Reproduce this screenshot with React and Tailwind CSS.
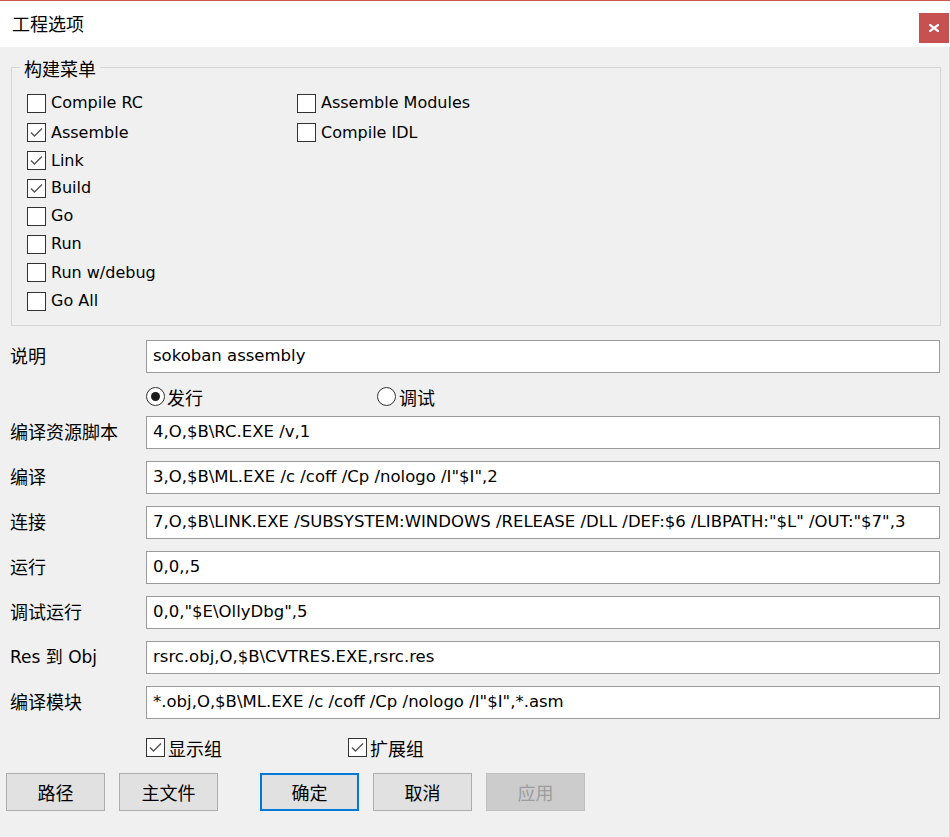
import React from 'react';

const LAT = "font-['DejaVu_Sans','Noto_Sans_CJK_SC',sans-serif]";
const CJK = "font-['Noto_Sans_CJK_SC','Noto_Sans',sans-serif]";

const CheckBox = ({ checked }) => (
  <span className="w-[19px] h-[19px] shrink-0 border border-[#333333] bg-white flex items-center justify-center">
    {checked && (
      <svg width="17" height="17" viewBox="0 0 17 17">
        <path d="M3 8.5 L6.5 12 L14 4.5" fill="none" stroke="#555555" strokeWidth="1.4" />
      </svg>
    )}
  </span>
);

const Radio = ({ checked }) => (
  <span className="w-[19px] h-[19px] shrink-0 rounded-full border border-[#333333] bg-white flex items-center justify-center">
    {checked && <span className="w-[9px] h-[9px] rounded-full bg-[#1a1a1a]" />}
  </span>
);

// build menu, column 1 and 2 (row heights follow the screenshot)
const col1 = [
  ['Compile RC', false, 'h-[30px]'],
  ['Assemble', true, 'h-[29px]'],
  ['Link', true, 'h-[27px]'],
  ['Build', true, 'h-[28px]'],
  ['Go', false, 'h-[28px]'],
  ['Run', false, 'h-[28px]'],
  ['Run w/debug', false, 'h-[29px]'],
  ['Go All', false, 'h-[28px]'],
];

const col2 = [
  ['Assemble Modules', false, 'h-[30px]'],
  ['Compile IDL', false, 'h-[29px]'],
];

const fields = [
  ['编译资源脚本', '4,O,$B\\RC.EXE /v,1'],
  ['编译', '3,O,$B\\ML.EXE /c /coff /Cp /nologo /I"$I",2'],
  ['连接', '7,O,$B\\LINK.EXE /SUBSYSTEM:WINDOWS /RELEASE /DLL /DEF:$6 /LIBPATH:"$L" /OUT:"$7",3'],
  ['运行', '0,0,,5'],
  ['调试运行', '0,0,"$E\\OllyDbg",5'],
  ['Res 到 Obj', 'rsrc.obj,O,$B\\CVTRES.EXE,rsrc.res'],
  ['编译模块', '*.obj,O,$B\\ML.EXE /c /coff /Cp /nologo /I"$I",*.asm'],
];

const CheckRow = ({ label, checked, cls }) => (
  <div className={`flex items-center gap-[5px] ${cls}`}>
    <CheckBox checked={checked} />
    <span className="text-[16px] leading-none text-black">{label}</span>
  </div>
);

const Field = ({ label, value, cls }) => (
  <div className={`flex items-center h-[33px] ${cls}`}>
    <span className={`w-[136px] text-black leading-none ${/^[A-Za-z]/.test(label) ? 'text-[17px]' : 'text-[18px]'}`}>
      {label}
    </span>
    <div className="w-[794px] h-full bg-white border border-[#9a9a9a] flex items-center pl-[6px] overflow-hidden whitespace-nowrap text-[16.5px] text-black leading-none">
      {value}
    </div>
  </div>
);

const Btn = ({ children, cls, primary, disabled }) => (
  <button
    className={`w-[99px] h-[38px] flex items-center justify-center text-[18px] ${CJK} ${
      primary
        ? 'border-2 border-[#0078d7] bg-[#e1e1e1] text-black'
        : disabled
        ? 'border border-[#bfbfbf] bg-[#cccccc] text-[#9d9d9d]'
        : 'border border-[#adadad] bg-[#e1e1e1] text-black'
    } ${cls}`}
    disabled={disabled}
  >
    {children}
  </button>
);

export default function App() {
  return (
    <div className={`w-[950px] h-[837px] bg-[#f0f0f0] border-t border-[#d0574e] flex flex-col ${LAT}`}>
      <div className="h-[46px] bg-white flex items-start justify-between">
        <span className={`mt-[11px] ml-[12px] text-[18px] leading-[22px] text-black ${CJK}`}>工程选项</span>
        <div className="mt-[12px] mr-[1px] w-[30px] h-[30px] bg-[#c75050] flex items-center justify-center">
          <svg width="10" height="8" viewBox="0 0 10 8">
            <path d="M1 1 L9 7 M9 1 L1 7" stroke="#ffffff" strokeWidth="2.2" strokeLinecap="square" />
          </svg>
        </div>
      </div>

      <div className="flex-1 flex flex-col border-r border-[#dadada]">
        <fieldset className="mt-[8px] ml-[11px] w-[930px] border border-[#d6d6d6] pl-[15px] pt-[9px] pb-[10px]">
          <legend className={`ml-[-7px] px-[4px] pt-[2px] text-[18px] leading-[22px] text-black ${CJK}`}>构建菜单</legend>
          <div className="flex">
            <div className="w-[270px] flex flex-col">
              {col1.map(([l, c, h]) => (
                <CheckRow key={l} label={l} checked={c} cls={h} />
              ))}
            </div>
            <div className="flex flex-col">
              {col2.map(([l, c, h]) => (
                <CheckRow key={l} label={l} checked={c} cls={h} />
              ))}
            </div>
          </div>
        </fieldset>

        <div className="pl-[10px] flex flex-col">
          <Field label="说明" value="sokoban assembly" cls="mt-[14px]" />

          <div className="mt-[14px] h-[19px] pl-[136px] flex items-center">
            <div className="w-[231px] flex items-center gap-[2px]">
              <Radio checked />
              <span className={`text-[18px] leading-none ${CJK}`}>发行</span>
            </div>
            <div className="flex items-center gap-[3px]">
              <Radio />
              <span className={`text-[18px] leading-none ${CJK}`}>调试</span>
            </div>
          </div>

          {fields.map(([l, v], i) => (
            <Field key={l} label={l} value={v} cls={i === 0 ? 'mt-[10px]' : 'mt-[12px]'} />
          ))}

          <div className="mt-[19px] h-[19px] pl-[136px] flex items-center">
            <div className="w-[202px] flex items-center gap-[3px]">
              <CheckBox checked />
              <span className={`text-[18px] leading-none ${CJK}`}>显示组</span>
            </div>
            <div className="flex items-center gap-[3px]">
              <CheckBox checked />
              <span className={`text-[18px] leading-none ${CJK}`}>扩展组</span>
            </div>
          </div>
        </div>

        <div className="mt-[16px] pl-[6px] flex">
          <Btn>路径</Btn>
          <Btn cls="ml-[14px]">主文件</Btn>
          <Btn cls="ml-[42px]" primary>确定</Btn>
          <Btn cls="ml-[14px]">取消</Btn>
          <Btn cls="ml-[14px]" disabled>应用</Btn>
        </div>
      </div>
    </div>
  );
}
